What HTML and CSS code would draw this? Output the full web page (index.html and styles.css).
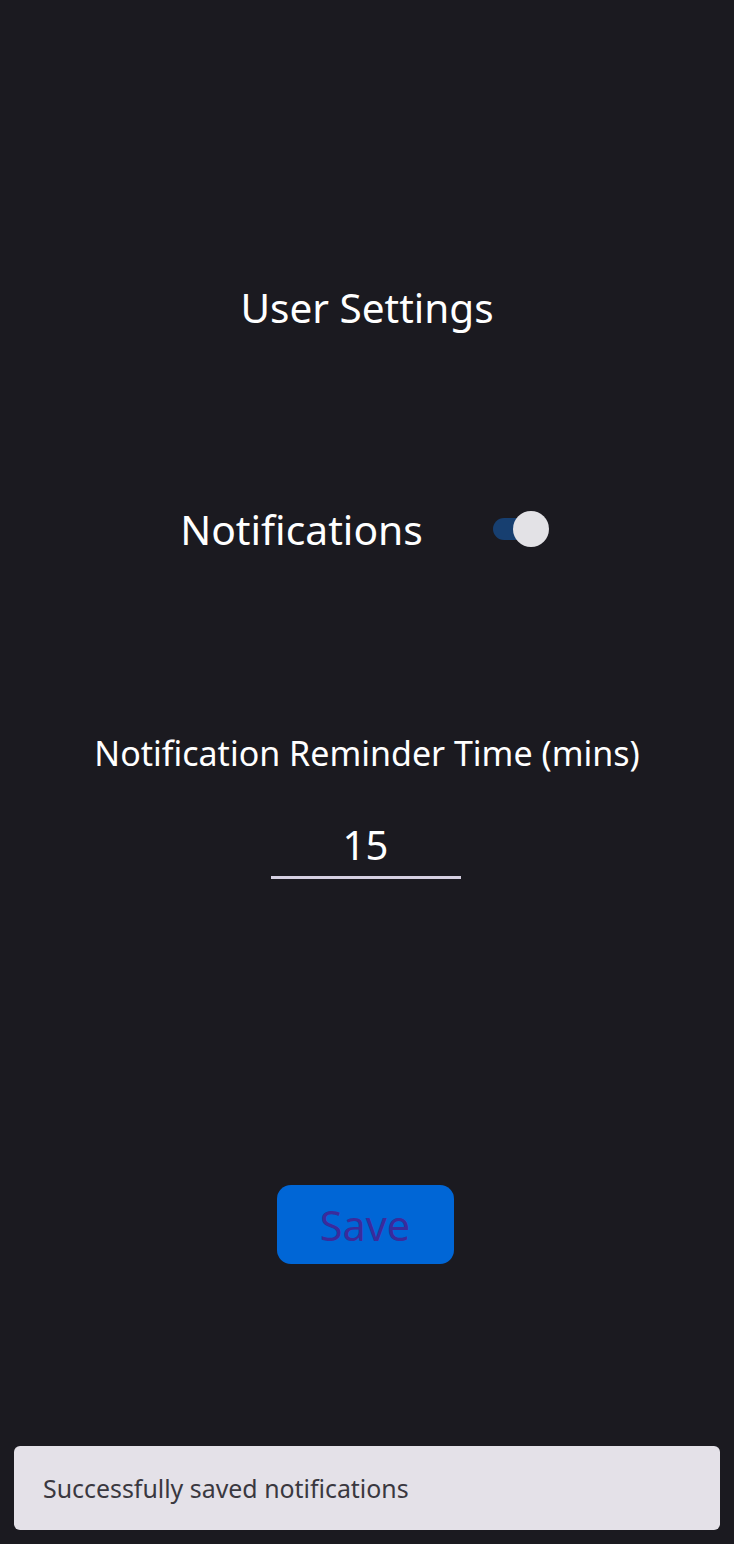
FILE: index.html
```html
<!DOCTYPE html>
<html>
<head>
<meta charset="utf-8">
<link rel="stylesheet" href="styles.css">
</head>
<body>
<div class="screen">
  <h1 class="title">User Settings</h1>
  <div class="row">
    <span class="row-label">Notifications</span>
    <span class="toggle"><span class="track"></span><span class="thumb"></span></span>
  </div>
  <div class="field">
    <div class="field-label">Notification Reminder Time (mins)</div>
    <div class="input">15</div>
  </div>
  <button class="save">Save</button>
  <div class="snackbar">Successfully saved notifications</div>
</div>
</body>
</html>
```
FILE: styles.css
```css
html, body {
  margin: 0;
  padding: 0;
  background: #1b1a20;
}
.screen {
  position: relative;
  width: 734px;
  height: 1544px;
  display: flex;
  flex-direction: column;
  align-items: center;
  font-family: "Noto Sans", "Open Sans", sans-serif;
  color: #ffffff;
}
.title {
  margin: 282px 0 0 0;
  font-size: 40.5px;
  font-weight: 400;
  line-height: 52px;
}
.row {
  margin-top: 169px;
  display: flex;
  align-items: center;
  gap: 70px;
  height: 52px;
  margin-left: -5px;
}
.row-label {
  font-size: 40.8px;
  line-height: 52px;
}
.toggle {
  position: relative;
  width: 56px;
  height: 36px;
  display: block;
}
.track {
  position: absolute;
  left: 0;
  top: 7px;
  width: 50px;
  height: 22px;
  border-radius: 11px;
  background: #173f70;
}
.thumb {
  position: absolute;
  left: 20px;
  top: 0;
  width: 36px;
  height: 36px;
  border-radius: 50%;
  background: #e3e2e6;
}
.field {
  margin-top: 175px;
  display: flex;
  flex-direction: column;
  align-items: center;
}
.field-label {
  font-size: 34px;
  line-height: 46px;
}
.input {
  margin-top: 47px;
  margin-left: -3px;
  width: 190px;
  text-align: center;
  font-size: 40px;
  line-height: 44px;
  padding-bottom: 9px;
  border-bottom: 3px solid #d6d0e2;
}
.save {
  margin-top: 306px;
  margin-left: -4px;
  width: 177px;
  height: 79px;
  border: none;
  border-radius: 14px;
  background: #0066d6;
  color: #3a2b9c;
  font-family: "Noto Sans", "Open Sans", sans-serif;
  font-size: 41.5px;
  padding: 0;
}
.snackbar {
  position: absolute;
  left: 14px;
  right: 14px;
  bottom: 14px;
  height: 84px;
  box-sizing: border-box;
  padding-left: 29px;
  display: flex;
  align-items: center;
  background: #e4e1e8;
  border-radius: 6px;
  color: #3a3840;
  font-size: 24.9px;
}
```
